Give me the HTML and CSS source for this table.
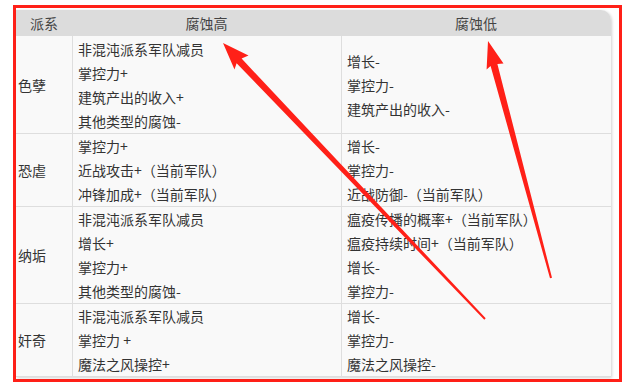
FILE: index.html
```html
<!DOCTYPE html>
<html lang="zh-CN">
<head>
    <meta charset="UTF-8">
    <meta name="viewport" content="width=device-width, initial-scale=1.0">
    <title>混沌派系腐蚀</title>
    <link rel="stylesheet" href="styles.css">
</head>
<body>
    <div class="frame">
        <table class="corruption">
            <thead>
                <tr>
                    <th class="col-faction">派系</th>
                    <th class="col-high">腐蚀高</th>
                    <th class="col-low">腐蚀低</th>
                </tr>
            </thead>
            <tbody>
                <tr>
                    <td class="faction">色孽</td>
                    <td>
                        <div>非混沌派系军队减员</div>
                        <div>掌控力+</div>
                        <div>建筑产出的收入+</div>
                        <div>其他类型的腐蚀-</div>
                    </td>
                    <td>
                        <div>增长-</div>
                        <div>掌控力-</div>
                        <div>建筑产出的收入-</div>
                    </td>
                </tr>
                <tr>
                    <td class="faction">恐虐</td>
                    <td>
                        <div>掌控力+</div>
                        <div>近战攻击+（当前军队）</div>
                        <div>冲锋加成+（当前军队）</div>
                    </td>
                    <td>
                        <div>增长-</div>
                        <div>掌控力-</div>
                        <div>近战防御-（当前军队）</div>
                    </td>
                </tr>
                <tr>
                    <td class="faction">纳垢</td>
                    <td>
                        <div>非混沌派系军队减员</div>
                        <div>增长+</div>
                        <div>掌控力+</div>
                        <div>其他类型的腐蚀-</div>
                    </td>
                    <td>
                        <div>瘟疫传播的概率+（当前军队）</div>
                        <div>瘟疫持续时间+（当前军队）</div>
                        <div>增长-</div>
                        <div>掌控力-</div>
                    </td>
                </tr>
                <tr>
                    <td class="faction">奸奇</td>
                    <td>
                        <div>非混沌派系军队减员</div>
                        <div>掌控力 +</div>
                        <div>魔法之风操控+</div>
                    </td>
                    <td>
                        <div>增长-</div>
                        <div>掌控力-</div>
                        <div>魔法之风操控-</div>
                    </td>
                </tr>
            </tbody>
        </table>
    </div>

    <!-- annotation arrows drawn over the table -->
    <svg class="marks" width="629" height="385" viewBox="0 0 629 385">
        <polygon points="223,43 248.5,55.5 241.6,58.6 485.7,318.3 484.3,319.7 236.6,63.2 234.5,69.5"/>
        <polygon points="488,41 503.5,63.5 497.4,64.1 552,277.7 550,278.3 490.6,66 486.6,69.5"/>
    </svg>
</body>
</html>
```

FILE: styles.css
```css
* {
    margin: 0;
    padding: 0;
    box-sizing: border-box;
}

body {
    font-family: "Noto Sans CJK SC", "Noto Sans", sans-serif;
    background: #fff;
    color: #333;
    width: 629px;
    height: 385px;
    position: relative;
    overflow: hidden;
}

.frame {
    position: relative;
    margin: 5px 0 0 13px;
    width: 609px;
    height: 377px;
    border: 3px solid #ff2018;
    padding: 2px 7px 0 0;
}

.corruption {
    width: 595px;
    border-collapse: separate;
    border-spacing: 0;
    background: #f9f9f9;
    font-size: 14px;
    box-shadow: 1px 1px 3px rgba(0, 0, 0, 0.18);
    border-top-right-radius: 10px;
}

.corruption th {
    height: 26px;
    background: #dcdcdc;
    font-weight: normal;
    color: #444;
    text-align: center;
    line-height: 26px;
}

.corruption th.col-low {
    border-top-right-radius: 10px;
}

.col-faction {
    width: 56px;
}

.col-high {
    width: 269px;
}

.corruption td {
    line-height: 24px;
    vertical-align: middle;
    padding: 0 0 0 5px;
    border-bottom: 1px solid #dedede;
    border-left: 1px solid #dedede;
    white-space: nowrap;
}

.corruption td.faction {
    border-left: none;
    padding-left: 2px;
}

.corruption tbody tr:first-child td {
    padding-top: 1px;
}

.marks {
    position: absolute;
    top: 0;
    left: 0;
    pointer-events: none;
}

.marks polygon {
    fill: #ff2018;
}
```
